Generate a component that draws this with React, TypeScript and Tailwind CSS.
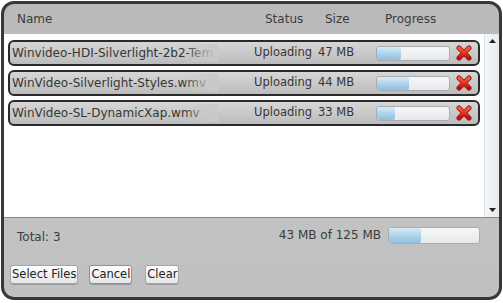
import React from 'react';

type Upload = { name: string; size: string; pct: number };

const uploads: Upload[] = [
  { name: 'Winvideo-HDI-Silverlight-2b2-Tem', size: '47 MB', pct: 34 },
  { name: 'WinVideo-Silverlight-Styles.wmv', size: '44 MB', pct: 45 },
  { name: 'WinVideo-SL-DynamicXap.wmv', size: '33 MB', pct: 25 },
];

const font = { fontFamily: '"DejaVu Sans", "Liberation Sans", sans-serif' };

const Bar: React.FC<{ pct: number; className: string }> = ({ pct, className }) => (
  <div className={`relative overflow-hidden rounded-[3px] border border-[#a9adb2] bg-gradient-to-b from-[#f6f7f8] to-[#e6e9ec] ${className}`}>
    <div
      className="h-full rounded-[2px] bg-gradient-to-b from-[#d7ebf7] via-[#aed3ea] to-[#8fc1df]"
      style={{ width: `${pct}%` }}
    />
  </div>
);

const RedX = () => (
  <svg width="16" height="16" viewBox="0 0 16 16">
    <defs>
      <linearGradient id="rx" x1="0" y1="0" x2="0" y2="1">
        <stop offset="0" stopColor="#ff5a3c" />
        <stop offset="1" stopColor="#c80d0d" />
      </linearGradient>
    </defs>
    <path d="M3 3 L13 13 M13 3 L3 13" stroke="#8a1a10" strokeWidth="5" strokeLinecap="round" />
    <path d="M3 3 L13 13 M13 3 L3 13" stroke="url(#rx)" strokeWidth="3.4" strokeLinecap="round" />
  </svg>
);

const Row: React.FC<{ u: Upload }> = ({ u }) => (
  <div className="flex h-[26px] items-center rounded-[6px] border-2 border-[#2a2a2a] bg-gradient-to-b from-[#d6d6d6] via-[#c9c9c9] to-[#bcbcbc] text-[12px] text-[#363636]">
    <div className="relative w-[208px] shrink-0 overflow-hidden whitespace-nowrap pl-[2px]">
      {u.name}
      <div className="absolute inset-y-0 right-0 w-[34px] bg-gradient-to-r from-transparent via-[#c9c9c9]/60 to-[#c9c9c9]" />
    </div>
    <div className="ml-[36px] w-[64px] shrink-0 whitespace-nowrap text-[11.5px]">Uploading</div>
    <div className="w-[58px] shrink-0 whitespace-nowrap text-[11.5px]">{u.size}</div>
    <Bar pct={u.pct} className="h-[15px] w-[74px] shrink-0" />
    <div className="ml-[6px]">
      <RedX />
    </div>
  </div>
);

const Button: React.FC<{ label: string; focus?: boolean; className?: string }> = ({ label, focus, className = '' }) => (
  <button
    className={`h-[19px] rounded-[3px] border bg-gradient-to-b from-[#ffffff] to-[#e4e6e8] px-[1px] text-[11.5px] leading-none text-[#222] shadow-[0_1px_0_#9a9a9a] ${
      focus ? 'border-[#5fa3b8]' : 'border-[#a6a6a6]'
    } ${className}`}
  >
    {label}
  </button>
);

export default function App() {
  return (
    <div className="h-[303px] w-[503px] bg-white pl-[1px] pt-[1px]" style={font}>
      <div className="flex h-[299px] w-[501px] flex-col overflow-hidden rounded-[13px] border-[3px] border-[#383838] bg-gradient-to-b from-[#b9b9b9] via-[#c4c4c4] to-[#c0c0c0]">
        {/* column header */}
        <div className="flex h-[30px] shrink-0 items-center text-[12px] text-[#3c3c3c]">
          <div className="w-[261px] pl-[13px]">Name</div>
          <div className="w-[60px]">Status</div>
          <div className="w-[60px]">Size</div>
          <div>Progress</div>
        </div>

        {/* list */}
        <div className="flex h-[184px] shrink-0 border-b border-[#7b8a94] bg-white">
          <div className="flex flex-1 flex-col gap-[4px] pl-[4px] pr-[4px] pt-[6px]">
            {uploads.map((u) => (
              <Row key={u.name} u={u} />
            ))}
          </div>
          <div className="flex w-[15px] flex-col items-center justify-between border-l border-[#dde2e6] bg-gradient-to-r from-[#f4f6f8] to-[#e8ecef] py-[5px]">
            <svg width="7" height="4" viewBox="0 0 7 4"><path d="M0 4 L3.5 0 L7 4Z" fill="#222" /></svg>
            <svg width="7" height="4" viewBox="0 0 7 4"><path d="M0 0 L7 0 L3.5 4Z" fill="#222" /></svg>
          </div>
        </div>

        {/* footer */}
        <div className="flex h-[30px] items-center text-[12px] text-[#3c3c3c]">
          <div className="flex-1 pl-[13px] pt-[8px]">Total: 3</div>
          <div className="flex items-center pt-[4px]">
            <span className="mr-[7px]">43 MB of 125 MB</span>
            <Bar pct={36} className="mr-[19px] h-[17px] w-[92px]" />
          </div>
        </div>
        <div className="flex pl-[6px] pt-[17px]">
          <Button label="Select Files" />
          <Button label="Cancel" focus className="ml-[11px]" />
          <Button label="Clear" className="ml-[13px]" />
        </div>
      </div>
    </div>
  );
}
